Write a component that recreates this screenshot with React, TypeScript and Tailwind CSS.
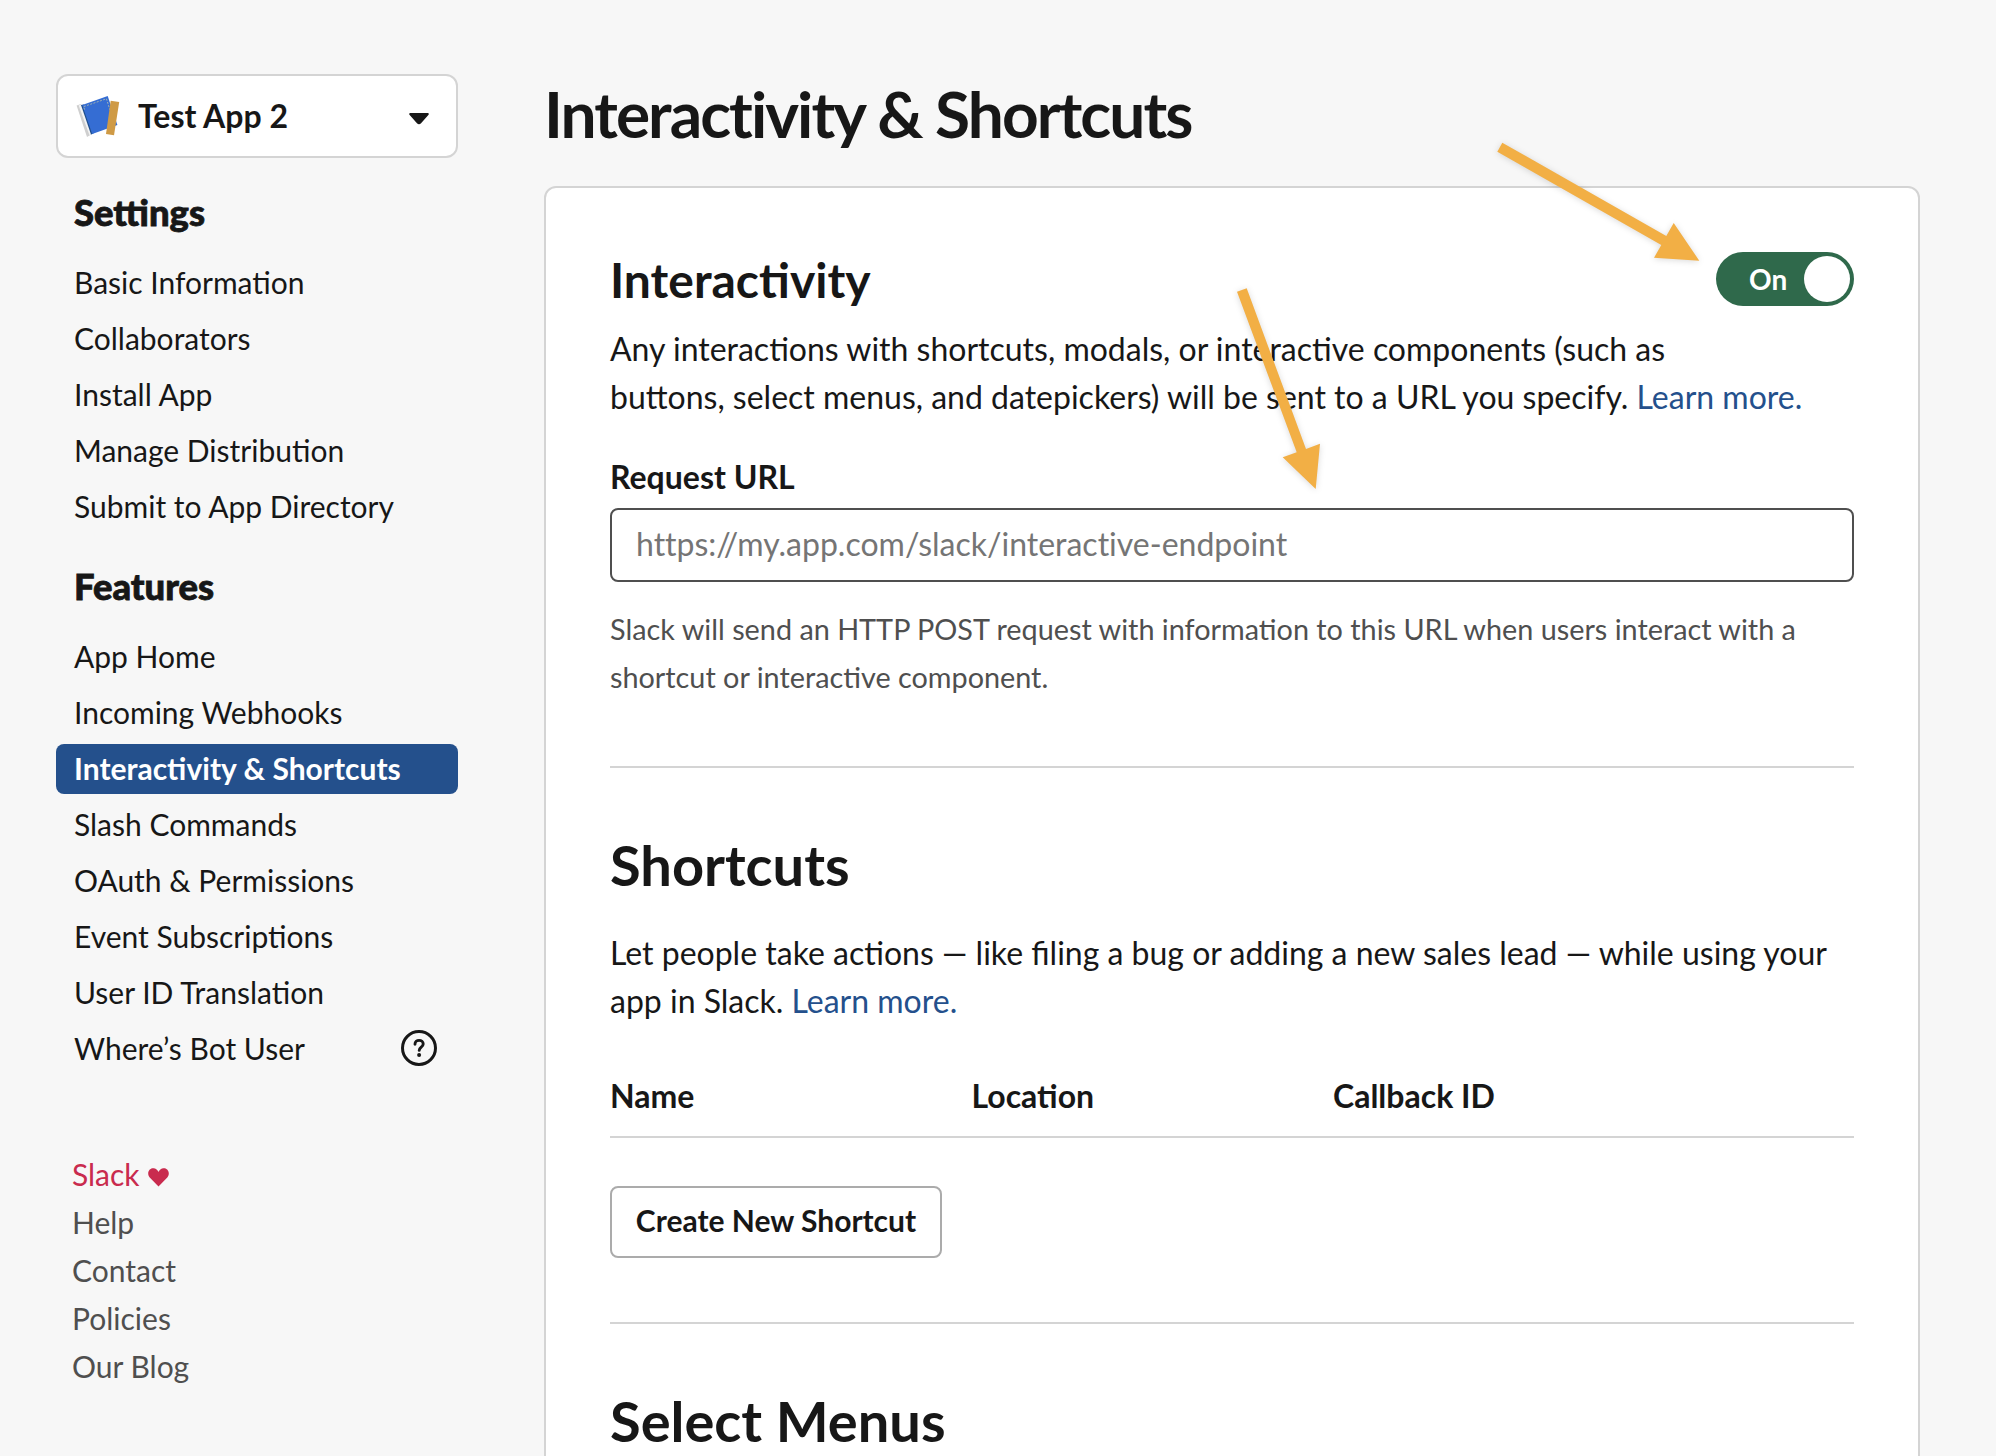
import React from "react";

type NavItem = { label: string; active?: boolean; help?: boolean };

const settings: NavItem[] = [
  { label: "Basic Information" },
  { label: "Collaborators" },
  { label: "Install App" },
  { label: "Manage Distribution" },
  { label: "Submit to App Directory" },
];

const features: NavItem[] = [
  { label: "App Home" },
  { label: "Incoming Webhooks" },
  { label: "Interactivity & Shortcuts", active: true },
  { label: "Slash Commands" },
  { label: "OAuth & Permissions" },
  { label: "Event Subscriptions" },
  { label: "User ID Translation" },
  { label: "Where’s Bot User", help: true },
];

function AppIcon() {
  return (
    <svg width="46" height="46" viewBox="0 0 46 46" className="block">
      <path d="M0.6 12.6 L5 11 L16 41 L11 44 Z" fill="#cfcfcf" />
      <path d="M2.6 12.2 L6 11.4 L16 41 L13.4 42 Z" fill="#f3f3f3" />
      <path d="M5 12 L8 11.5 L17.5 40.5 L15 41.4 Z" fill="#1f4e8c" />
      <path d="M6.2 11.9 L31.7 3 L41.4 32 L16.2 41 Z" fill="#356dd3" />
      <path d="M8.6 16.6 L7.6 13.6 L30.4 5.8 L34 17" fill="none" stroke="#a9b5ad" strokeWidth="0.9" strokeDasharray="2 1.4" />
      <path d="M34.7 7.8 L43.2 9 L38 42.2 L30 41 Z" fill="#cf9a45" />
    </svg>
  );
}

function HelpIcon() {
  return (
    <svg width="36" height="36" viewBox="0 0 36 36" fill="none" stroke="#171717" className="block">
      <circle cx="18" cy="18" r="16.5" strokeWidth="3" />
      <path d="M14 14.2c0-2.3 1.8-3.8 4.1-3.8s4.1 1.5 4.1 3.7c0 3-4 3.2-4 6.3" strokeWidth="2.9" strokeLinecap="round" />
      <circle cx="18.1" cy="25.1" r="2" fill="#171717" stroke="none" />
    </svg>
  );
}

function Nav({ title, items }: { title: string; items: NavItem[] }) {
  return (
    <nav className="mt-[30px]">
      <h2 className="mb-[22px] pl-[18px] text-[36.4px] leading-[48px] font-black [-webkit-text-stroke:0.8px_#171717]">
        {title}
      </h2>
      <ul className="flex flex-col gap-[6px]">
        {items.map((i) => (
          <li
            key={i.label}
            className={
              i.active
                ? "flex h-[50px] items-center rounded-[8px] bg-[#24508c] px-[18px] pb-[2px] text-[30px] font-bold text-white"
                : "flex h-[50px] items-center justify-between pr-[21px] pb-[2px] pl-[18px] text-[30px]"
            }
          >
            <span className="whitespace-nowrap">{i.label}</span>
            {i.help && <HelpIcon />}
          </li>
        ))}
      </ul>
    </nav>
  );
}

function Link() {
  return <a className="text-[#24508c]">Learn more.</a>;
}

export default function App() {
  return (
    <div className="relative flex h-[1456px] w-[1996px] overflow-hidden bg-[#f7f7f7] font-['Lato',sans-serif] text-[#171717]">
      <aside className="ml-[56px] w-[402px] shrink-0 pt-[74px]">
        <div className="flex h-[84px] items-center rounded-[12px] border-2 border-[#d4d4d4] bg-white pr-[26px] pl-[18px]">
          <AppIcon />
          <span className="ml-[16px] flex-1 text-[32px] font-bold">Test App 2</span>
          <svg width="22" height="13" viewBox="0 0 22 13" className="mt-[4px] block">
            <path d="M2.2 2 H19.8 L12.3 10.6 Q11 12 9.7 10.6 Z" fill="#171717" stroke="#171717" strokeWidth="2" strokeLinejoin="round" />
          </svg>
        </div>
        <Nav title="Settings" items={settings} />
        <Nav title="Features" items={features} />
        <ul className="mt-[76px] pl-[16px] text-[30px] leading-[48px] text-[#4f4f4f]">
          <li className="flex items-center text-[#c92b4e]">
            Slack
            <svg width="21" height="19" viewBox="0 0 22 19" preserveAspectRatio="none" className="mt-[6px] ml-[8px] block">
              <path d="M11 18.5 L1.8 9.6 C-2.2 5 2 -1.6 7.2 0.6 C9 1.2 10.2 2.6 11 4 C11.8 2.6 13 1.2 14.8 0.6 C20 -1.6 24.2 5 20.2 9.6 Z" fill="#c92b4e" />
            </svg>
          </li>
          <li>Help</li>
          <li>Contact</li>
          <li>Policies</li>
          <li>Our Blog</li>
        </ul>
      </aside>

      <main className="ml-[86px] w-[1376px] shrink-0 pt-[74px]">
        <h1 className="h-[112px] text-[64px] leading-[80px] font-bold tracking-[-1.94px] whitespace-nowrap">
          Interactivity &amp; Shortcuts
        </h1>
        <div className="h-[1400px] rounded-[12px] border-2 border-[#d4d4d4] bg-white px-[64px] pt-[64px]">
          <section>
            <div className="flex h-[54px] items-center justify-between">
              <h2 className="pt-[2px] text-[48px] leading-[54px] font-bold">Interactivity</h2>
              <div className="flex h-[54px] w-[138px] items-center justify-between rounded-full bg-[#2f694b] pr-[4px] pl-[33px]">
                <span className="text-[28px] font-bold text-white">On</span>
                <span className="size-[46px] rounded-full bg-white" />
              </div>
            </div>
            <p className="mt-[19px] text-[32px] leading-[48px] whitespace-nowrap">
              Any interactions with shortcuts, modals, or interactive components (such as
              <br />
              buttons, select menus, and datepickers) will be sent to a URL you specify. <Link />
            </p>
            <div className="mt-[32px] text-[32px] leading-[48px] font-bold">Request URL</div>
            <div className="mt-[7px] flex h-[74px] items-center rounded-[8px] border-2 border-[#4f4f4f] px-[24px] pb-[3px] text-[32px] text-[#757575] [font-variant-ligatures:none]">
              https://my.app.com/slack/interactive-endpoint
            </div>
            <p className="mt-[23px] text-[28.8px] leading-[48px] whitespace-nowrap text-[#4f4f4f]">
              Slack will send an HTTP POST request with information to this URL when users interact with a
              <br />
              shortcut or interactive component.
            </p>
          </section>

          <section className="mt-[65px] border-t-2 border-[#d4d4d4] pt-[62px]">
            <h2 className="text-[56px] leading-[70px] font-bold">Shortcuts</h2>
            <p className="mt-[29px] text-[32px] leading-[48px] whitespace-nowrap">
              Let people take actions — like filing a bug or adding a new sales lead — while using your
              <br />
              app in Slack. <Link />
            </p>
            <div className="mt-[49px] flex h-[64px] border-b-2 border-[#d4d4d4] text-[32px] leading-[44px] font-bold">
              <span className="w-[361.5px]">Name</span>
              <span className="w-[361.5px]">Location</span>
              <span>Callback ID</span>
            </div>
            <button className="mt-[48px] flex h-[72px] w-[332px] items-center justify-center rounded-[8px] border-2 border-[#ababab] pb-[3px] text-[30px] font-bold whitespace-nowrap">
              Create New Shortcut
            </button>
          </section>

          <section className="mt-[64px] border-t-2 border-[#d4d4d4] pt-[62px]">
            <h2 className="text-[56px] leading-[70px] font-bold">Select Menus</h2>
          </section>
        </div>
      </main>

      {/* Annotation arrows drawn over the page */}
      <svg
        className="pointer-events-none absolute inset-0 drop-shadow-[0_1px_3px_rgba(0,0,0,0.15)]"
        width="1996"
        height="1456"
        viewBox="0 0 1996 1456"
        fill="#f2af45"
      >
        <path d="M1502.3 142.7 L1666.3 236 L1673.7 223 L1699.3 260.7 L1654 257.7 L1661.3 245 L1497.3 151.7 Z" />
        <path d="M1246.7 288.3 L1306 449 L1320 443.7 L1315.7 489 L1282.7 457.3 L1296.7 452.3 L1237 291.7 Z" />
      </svg>
    </div>
  );
}
